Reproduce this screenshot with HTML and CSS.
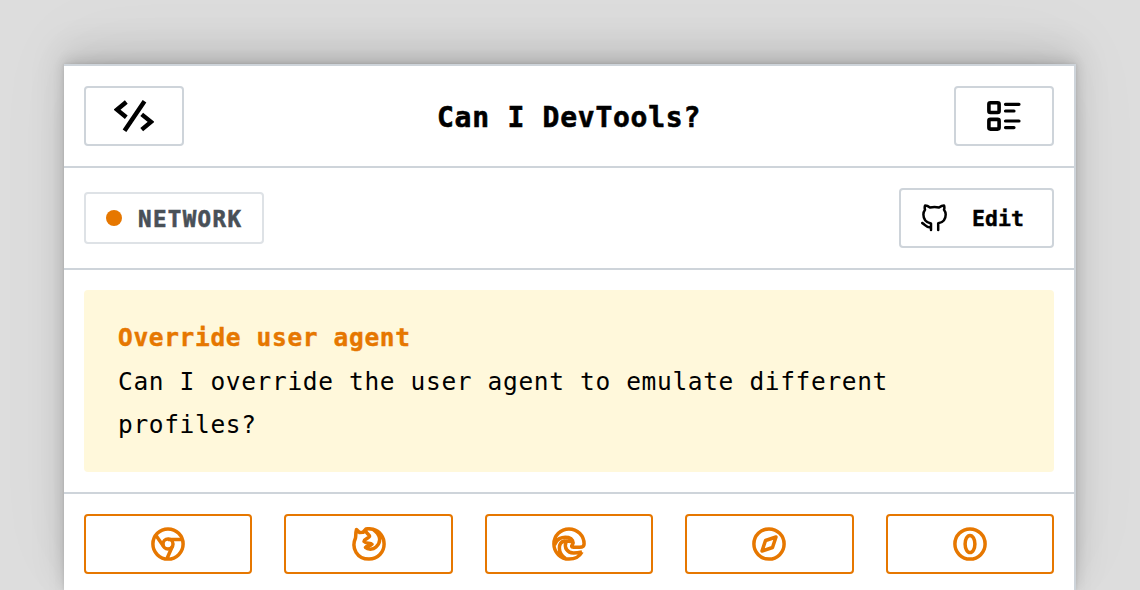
FILE: index.html
```html
<!DOCTYPE html>
<html lang="en">
<head>
<meta charset="utf-8">
<title>Can I DevTools?</title>
<link rel="stylesheet" href="styles.css">
</head>
<body>
<main class="card">
  <header class="row header">
    <a class="button icon-button" aria-label="Home">
      <svg class="code-icon" width="40" height="32" viewBox="0 0 40 32" fill="none" stroke="currentColor" stroke-width="4.4"><path d="M12.300 2 3 9.700l9.300 7.500M30.500 1.200 10.500 30.800M27.700 14.400l9.300 7.500-9.300 7.700"/></svg>
    </a>
    <h1 class="title">Can I DevTools?</h1>
    <a class="button icon-button" aria-label="Features">
      <svg class="list-icon" width="34" height="30" viewBox="0 0 34 30" fill="none" stroke="currentColor" stroke-width="3.200" stroke-linecap="round"><g stroke-width="3.600"><rect x="1.900" y="1.800" width="10.200" height="9.700" rx="1.500"/><rect x="1.900" y="18.400" width="10.200" height="9.700" rx="1.500"/></g><path d="M18.500 3.300H32M18.500 10H27M18.500 20H32M18.500 26.600H27"/></svg>
    </a>
  </header>
  <section class="row meta">
    <span class="tag"><i class="dot"></i><span class="tag-label">NETWORK</span></span>
    <a class="button edit">
      <svg width="26" height="28" viewBox="0 0 26 28" fill="none" stroke="currentColor" stroke-width="2.500" stroke-linecap="round" stroke-linejoin="round"><path d="M10 26V19.500C5 18.500 2.400 15 2.400 10.500C2.400 8.500 3 7 4 5.700C3.500 4 3.600 2.800 4.100 1.500C6 1.500 8 2.700 9 3.500C11.500 2.900 15.500 2.900 18 3.500C19.500 2.400 21.500 1.500 23 1.500C23.500 3 23.500 4.500 23 5.700C24 7 24.700 8.500 24.700 10.500C24.700 15 22 18.500 17.200 19.200V26M10 23.500C5 24 4.500 20.500 1.200 19"/></svg>
      <span>Edit</span>
    </a>
  </section>
  <section class="row">
    <div class="notice">
      <h2 class="notice-title">Override user agent</h2>
      <p class="notice-text">Can I override the user agent to emulate different profiles?</p>
    </div>
  </section>
  <section class="browsers">
    <a class="browser" aria-label="Chrome"><svg class="browser-icon" viewBox="0 0 34 34"><circle cx="17" cy="17" r="15.100"/><circle cx="17" cy="17" r="5"/><path d="M5 8.500 12.700 19.500M17 12.500H31M21.300 19.500 16 31.500"/></svg></a>
    <a class="browser" aria-label="Firefox"><svg class="browser-icon" viewBox="0 0 34 34"><path d="M4.500 2.500C3.500 6 4 8 3.500 11C-1 21 5 32.100 17 32.100C26 32.100 32.100 25 32.100 17C32.100 10 28 4 21 2.300C18.500 1.700 16 1.500 14 2L11 5.300L7.500 5.500ZM14 2C12.500 6 17.500 7 17.500 9.500C16.500 11.500 12.500 11.500 12 14.500C14 17 18.500 15.500 20 17.300C18 20 15 18 13.500 20.500C15.500 22.500 21 23 24 20C29.500 15 29 8 21 2.300"/></svg></a>
    <a class="browser" aria-label="Edge"><svg class="browser-icon" viewBox="0 0 34 34"><path d="M30 25C27.500 29.500 23 32.100 17 32.100A15.100 15.100 0 1 1 32.100 17C32.100 19.500 30.500 20.300 27.500 20.300H21.500C19.300 20.300 19 19 20.500 17.500C22 15 20.500 11.500 16.500 10.500C9.500 9 4 12.500 2.500 18M13.500 31.500C5.500 26 5.500 15.500 12.500 14C15 13.500 17.500 14.500 20 14.500M14 15C12 20.500 15 26 21.500 26C25 26 27.500 25.500 30 25"/></svg></a>
    <a class="browser" aria-label="Safari"><svg class="browser-icon" viewBox="0 0 34 34"><circle cx="17" cy="17" r="15.100"/><path d="m24 10-3.500 10.500L10 24l3.500-10.500Z"/></svg></a>
    <a class="browser" aria-label="Opera"><svg class="browser-icon" viewBox="0 0 34 34"><circle cx="17" cy="17" r="15.100"/><ellipse cx="17" cy="17" rx="4.900" ry="8.500"/></svg></a>
  </section>
</main>
</body>
</html>
```
FILE: styles.css
```css
* { box-sizing: border-box; }
body {
  height: 590px;
  margin: 0;
  padding: 64px 64px 0;
  overflow: hidden;
  background: #dddddd;
  color: #000;
  font-family: "DejaVu Sans Mono", monospace;
}
.card {
  width: 1012px;
  height: 526px;
  border: solid #ced4da;
  border-width: 2px 2px 0 0;
  background: #fff;
  box-shadow: 0 0 3px rgba(0,0,0,.1), 0 -3px 12px rgba(0,0,0,.12), 0 -14px 34px rgba(0,0,0,.12), 0 -24px 80px rgba(0,0,0,.04), 0 40px 24px rgba(0,0,0,.03);
}
.row { padding: 20px; border-bottom: 2px solid #ced4da; }
.header, .meta { display: flex; align-items: center; justify-content: space-between; height: 102px; }
.button {
  display: flex;
  align-items: center;
  justify-content: center;
  height: 60px;
  border: 2px solid #ced4da;
  border-radius: 4px;
}
.icon-button { width: 100px; }
.title { margin: 0; padding-top: 3px; font-size: 28px; letter-spacing: .74px; line-height: 40px; -webkit-text-stroke: .6px; }
.tag {
  display: flex;
  align-items: center;
  gap: 16px;
  width: 180px;
  height: 52px;
  padding-left: 20px;
  border: 2px solid #dee2e6;
  border-radius: 4px;
  color: #495057;
  font-size: 22.500px;
  font-weight: 700;
  letter-spacing: 1.350px;
  -webkit-text-stroke: .6px;
}
.tag-label { padding-top: 2px; }
.dot { width: 16px; height: 16px; border-radius: 50%; background: #e67700; }
.edit { width: 155px; gap: 25px; padding-right: 8px; font-size: 21.500px; font-weight: 700; -webkit-text-stroke: .4px; }
.notice { height: 182px; padding: 26px 34px; border-radius: 4px; background: #fff8db; }
.notice-title, .notice-text { margin: 0; font-size: 24.500px; line-height: 43.500px; letter-spacing: .65px; }
.notice-title { color: #e67700; -webkit-text-stroke: .4px; }
.browsers { display: grid; grid-template-columns: repeat(5, 1fr); gap: 32px; padding: 20px 20px 0; }
.browser { display: flex; align-items: center; justify-content: center; height: 60px; border: 2px solid #e67700; border-radius: 4px; }
.browser-icon { width: 34px; height: 34px; fill: none; stroke: #e67700; stroke-width: 3.500; stroke-linejoin: round; }
```
